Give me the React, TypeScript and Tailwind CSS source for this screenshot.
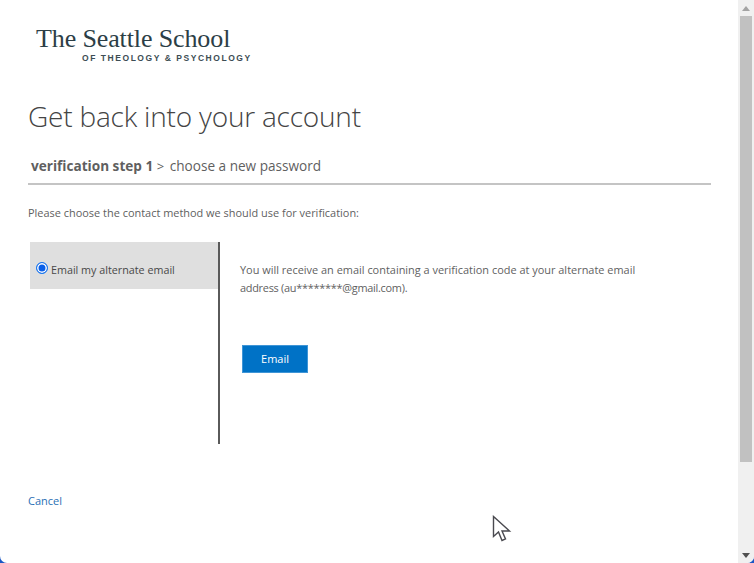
function Cursor() {
  return (
    <svg width="20" height="28" viewBox="0 0 20 28" className="absolute left-[492px] top-[515px]">
      <path d="M1.5 1.5V21.5L6.5 17L10 25.5L13.5 24L10 16H17.5Z" fill="#fff" stroke="#4a4a50" strokeWidth="1.4" strokeLinejoin="miter" />
    </svg>
  );
}

function Scrollbar() {
  return (
    <div className="w-4 shrink-0 h-full bg-[#f0f0f0] flex flex-col items-center">
      <div className="h-4 w-full shrink-0 flex items-center justify-center">
        <svg width="8" height="5" viewBox="0 0 8 5"><path d="M4 0L8 5H0Z" fill="#a3a3a3" /></svg>
      </div>
      <div className="w-3 h-[446px] bg-[#c1c1c1]" />
      <div className="flex-1 flex items-end justify-center pb-[5px]">
        <svg width="8" height="5" viewBox="0 0 8 5"><path d="M0 0H8L4 5Z" fill="#505050" /></svg>
      </div>
    </div>
  );
}

export default function App() {
  return (
    <div className="relative w-[754px] h-[563px] overflow-hidden bg-[#1a56c4] font-['Open_Sans',sans-serif] text-[#5f5f5f]">
      <div className="flex w-full h-full bg-white rounded-b-[7px] overflow-hidden">
        <div className="flex-1 pl-7 pr-[27px]">
          <div className="pl-2 pt-[24px] h-[96px] text-[#2c3e46]">
            <div className="font-['Liberation_Serif',serif] text-[26px] leading-[30px] tracking-[-0.12px]">The Seattle School</div>
            <div className="pl-[46px] font-['Liberation_Sans',sans-serif] font-bold text-[8.5px] leading-[9px] tracking-[1.55px] text-[#3d4d54]">OF THEOLOGY &amp; PSYCHOLOGY</div>
          </div>
          <h1 className="font-light text-[28px] leading-10 tracking-[-0.2px] text-[#444444]">Get back into your account</h1>
          <div className="mt-[10px] pl-[3px] h-[39px] border-b-2 border-[#c4c4c4] text-[13.6px] leading-[20px] pt-[10px]">
            <span className="font-bold">verification step 1</span> <span className="text-[13px]">&gt;</span> <span className="ml-[2px]">choose a new password</span>
          </div>
          <p className="mt-5 text-[10.95px] leading-4">Please choose the contact method we should use for verification:</p>
          <div className="mt-[21px] flex h-[202px]">
            <div className="w-[192px] pl-[2px] border-r-2 border-[#5a5a5a]">
              <label className="h-[47px] bg-[#dfdfdf] flex items-center gap-[3px] pl-[6px] pt-[9px] text-[10.75px] text-[#484848]">
                <input type="radio" defaultChecked className="appearance-none w-3 h-3 rounded-full border-[1.5px] border-[#1a78f0] bg-[#0a5fe8] shadow-[inset_0_0_0_1.5px_#fff] mb-[4px]" />
                Email my alternate email
              </label>
            </div>
            <div className="pl-5 pt-[19px] flex-1">
              <p className="text-[10.95px] leading-[18px] whitespace-nowrap">You will receive an email containing a verification code at your alternate email</p>
              <p className="text-[10.95px] leading-[18px] tracking-[-0.28px] whitespace-nowrap">address (au********@gmail.com).</p>
              <button className="mt-12 ml-[2px] w-[66px] h-[28px] bg-[#0072c6] text-white text-[11px] font-medium border border-[#3f95d6]">Email</button>
            </div>
          </div>
          <a className="block mt-[49px] text-[11px] leading-4 text-[#2a6fb5]">Cancel</a>
        </div>
        <Scrollbar />
      </div>
      <Cursor />
    </div>
  );
}
